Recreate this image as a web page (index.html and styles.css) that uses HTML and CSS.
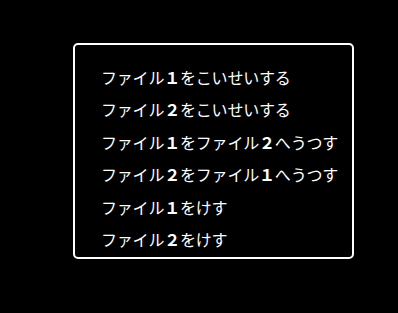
FILE: index.html
```html
<!DOCTYPE html>
<html lang="ja">

<head>
    <meta charset="UTF-8" />
    <title>ファイル</title>
    <link rel="stylesheet" href="styles.css">
</head>

<body>
    <div class="waku">
        <ul class="menu">
            <li>ファイル<b>１</b>をこいせいする</li>
            <li>ファイル<b>２</b>をこいせいする</li>
            <li>ファイル<b>１</b>をファイル<b>２</b>へうつす</li>
            <li>ファイル<b>２</b>をファイル<b>１</b>へうつす</li>
            <li>ファイル<b>１</b>をけす</li>
            <li>ファイル<b>２</b>をけす</li>
        </ul>
    </div>
</body>

</html>
```

FILE: styles.css
```css
body {
    margin: 0;
    background: #000;
    color: #fff;
    font-family: "Noto Sans CJK JP", sans-serif;
}

.waku {
    margin: 43px 0 0 73px;
    width: 277px;
    height: 212px;
    border: 2px solid #fff;
    border-radius: 5px;
}

.menu {
    list-style: none;
    margin: 0;
    padding: 16px 0 0 26px;
    font-size: 16px;
    line-height: 32.4px;
    letter-spacing: -0.2px;
}

.menu b {
    font-weight: bold;
}
```
